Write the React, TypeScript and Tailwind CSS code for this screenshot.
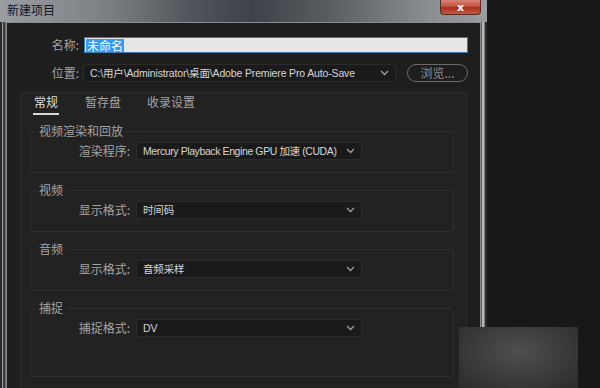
import React from "react";

const font = { fontFamily: '"Noto Sans CJK SC", "Noto Sans", sans-serif' };
const latin = { fontFamily: '"Liberation Sans", "Noto Sans CJK SC", sans-serif' };

function Chevron() {
  return (
    <svg width="9" height="6" viewBox="0 0 9 6" className="shrink-0">
      <path d="M1 1 L4.5 4.5 L8 1" stroke="#a0a0a0" strokeWidth="1.3" fill="none" />
    </svg>
  );
}

function Select({ text, width, tight }: { text: string; width: string; tight?: boolean }) {
  return (
    <div
      className={`${width} h-[18px] flex items-center justify-between pl-[6px] pr-[6px] bg-[#1a1a1a] border border-[#2b2b2b] rounded-[2px] text-[10.5px] ${tight ? "tracking-[-0.4px]" : "tracking-[-0.15px]"} text-[#d6d6d6] whitespace-nowrap`}
      style={latin}
    >
      <span className="leading-none">{text}</span>
      <Chevron />
    </div>
  );
}

function Group({
  title,
  label,
  value,
  pb,
  tight,
}: {
  title: string;
  label: string;
  value: string;
  pb: string;
  tight?: boolean;
}) {
  return (
    <fieldset className={`border border-[#2f2f2f] rounded-[3px] mx-0 ${pb}`}>
      <legend className="ml-[5px] px-[3px] text-[12px] leading-[16px] text-[#a4a4a4]">{title}</legend>
      <div className="flex items-center mt-[3px]">
        <div className="w-[99px] text-right text-[12px] text-[#a4a4a4] leading-none">{label}</div>
        <div className="ml-[6px]">
          <Select text={value} width="w-[226px]" tight={tight} />
        </div>
      </div>
    </fieldset>
  );
}

export default function App() {
  return (
    <div className="w-[600px] h-[388px] bg-[#181818] relative overflow-hidden flex" style={font}>
      {/* Window */}
      <div className="w-[487px] h-full flex flex-col bg-[linear-gradient(to_bottom,#6b6f73_0%,#4a4e52_30%,#3a3c3e_100%)]">
        {/* Title bar */}
        <div className="h-[22px] flex items-start shrink-0 bg-[linear-gradient(to_right,#9a9ea2_0%,#7c8084_22%,#50545a_40%,#3e4248_52%,#5a5e62_68%,#8a8e92_88%,#9a9ea2_100%)]">
          <div className="pl-[7px] pt-[3px] text-[12px] leading-[14px] text-[#14141e]">新建项目</div>
          <div className="ml-auto mr-[6px] w-[41px] h-[15px] flex items-center justify-center rounded-b-[4px] border border-t-0 border-[#5a2a24] bg-[linear-gradient(to_bottom,#d8857a_0%,#c4503e_45%,#a8301c_55%,#c45a40_100%)]">
            <span className="text-[11px] font-bold text-white leading-none" style={{ fontFamily: '"DejaVu Sans", sans-serif' }}>x</span>
          </div>
        </div>
        {/* Body */}
        <div className="flex-1 flex min-h-0">
          <div className="w-[6px] flex">
            <div className="w-[2px] bg-[#2a2a2a]" />
            <div className="w-[1px] bg-[#9a9ea2]" />
            <div className="w-[2px] bg-[#3a3c3e]" />
            <div className="w-[1px] bg-[#6a6e72]" />
          </div>
          <div className="flex-1 flex flex-col bg-[#1e1e1e] border-t border-x border-[#8a8c8e] min-h-0">
            {/* Name row */}
            <div className="flex items-center mt-[14px] pl-[1px]">
              <div className="w-[71px] text-right text-[12px] text-[#a4a4a4] leading-none">名称:</div>
              <div className="ml-[5px] w-[384px] h-[16px] bg-[#e6e6e6] border border-[#3d7ab0] flex items-center pl-[1px]">
                <span className="bg-[#3399ff] text-white text-[12px] leading-[13px] px-[1px]">未命名</span>
              </div>
            </div>
            {/* Location row */}
            <div className="flex items-center mt-[11px] pl-[1px]">
              <div className="w-[71px] text-right text-[12px] text-[#a4a4a4] leading-none">位置:</div>
              <div className="ml-[4px]">
                <Select text="C:\用户\Administrator\桌面\Adobe Premiere Pro Auto-Save" width="w-[313px]" />
              </div>
              <div className="ml-[11px] w-[61px] h-[18px] rounded-full border border-[#6a6a6a] flex items-center justify-center text-[12px] text-[#8e8e8e] leading-none">
                浏览...
              </div>
            </div>
            {/* Tab panel */}
            <div className="ml-[13px] mr-[13px] mt-[10px] flex-1 bg-[#222222] border-t border-x border-[#2c2c2c] flex flex-col">
              <div className="flex pl-[12px] pt-[1px] gap-[26px] text-[12px] text-[#a4a4a4]">
                <div className="flex flex-col items-center">
                  <span className="leading-[16px] text-[#dcdcdc]">常规</span>
                  <div className="mt-[3px] w-[26px] h-[2px] bg-[#d8d8d8]" />
                </div>
                <span className="leading-[16px]">暂存盘</span>
                <span className="leading-[16px]">收录设置</span>
              </div>
              <div className="mt-[8px] ml-[9px] mr-[12px] flex flex-col gap-[9px]">
                <Group title="视频渲染和回放" label="渲染程序:" value="Mercury Playback Engine GPU 加速 (CUDA)" pb="pb-[12px]" tight />
                <Group title="视频" label="显示格式:" value="时间码" pb="pb-[12px]" />
                <Group title="音频" label="显示格式:" value="音频采样" pb="pb-[12px]" />
                <Group title="捕捉" label="捕捉格式:" value="DV" pb="pb-[39px]" />
              </div>
            </div>
          </div>
          <div className="w-[6px] flex">
            <div className="w-[1px] bg-[#5a5c5e]" />
            <div className="w-[2px] bg-[#b4b6b8]" />
            <div className="w-[1px] bg-[#7a7c7e]" />
            <div className="w-[2px] bg-[#2a2a2a]" />
          </div>
        </div>
      </div>
      {/* watermark box */}
      <div className="absolute left-[459px] top-[327px] w-[119px] h-[61px] bg-[radial-gradient(ellipse_at_50%_40%,#4e5050_0%,#3a3c3c_55%,#2a2c2c_100%)]" />
    </div>
  );
}
